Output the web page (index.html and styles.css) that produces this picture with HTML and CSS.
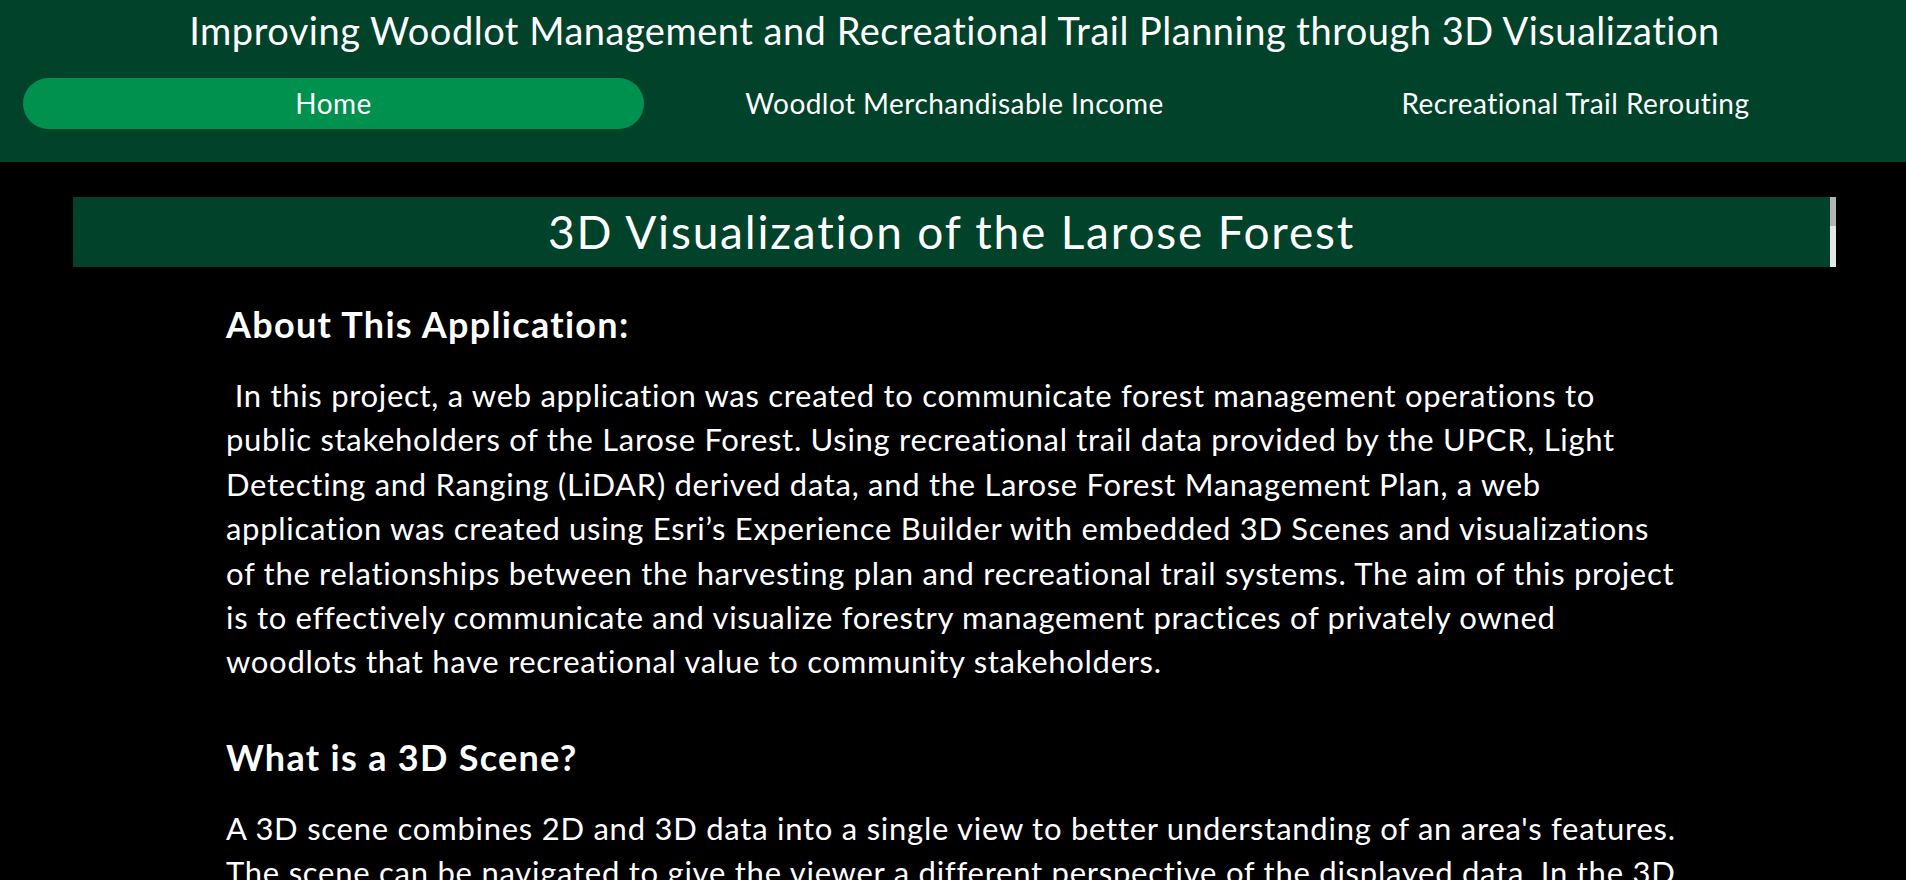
FILE: index.html
```html
<!DOCTYPE html>
<html lang="en">
<head>
<meta charset="utf-8">
<title>Improving Woodlot Management and Recreational Trail Planning through 3D Visualization</title>
<link rel="stylesheet" href="styles.css">
</head>
<body>
<header class="top">
  <h1 class="site-title">Improving Woodlot Management and Recreational Trail Planning through 3D Visualization</h1>
  <nav class="tabs">
    <a class="tab tab-active" href="#">Home</a>
    <a class="tab" href="#">Woodlot Merchandisable Income</a>
    <a class="tab" href="#">Recreational Trail Rerouting</a>
  </nav>
</header>
<main class="page">
  <div class="banner">
    <h2 class="banner-title">3D Visualization of the Larose Forest</h2>
    <div class="scrollbar"><div class="scrollbar-thumb"></div></div>
  </div>
  <section class="article">
    <h3 class="article-heading">About This Application:</h3>
    <p class="article-text">&nbsp;In this project, a web application was created to communicate forest management operations to<br>public stakeholders of the Larose Forest. Using recreational trail data provided by the UPCR, Light<br>Detecting and Ranging (LiDAR) derived data, and the Larose Forest Management Plan, a web<br>application was created using Esri’s Experience Builder with embedded 3D Scenes and visualizations<br>of the relationships between the harvesting plan and recreational trail systems. The aim of this project<br>is to effectively communicate and visualize forestry management practices of privately owned<br>woodlots that have recreational value to community stakeholders.</p>
    <h3 class="article-heading">What is a 3D Scene?</h3>
    <p class="article-text article-text-wide">A 3D scene combines 2D and 3D data into a single view to better understanding of an area's features.<br>The scene can be navigated to give the viewer a different perspective of the displayed data. In the 3D<br>scenes of this application, users can explore the forest stands and trails from any angle.</p>
  </section>
</main>
</body>
</html>
```

FILE: styles.css
```css
html, body {
  margin: 0;
  padding: 0;
  overflow: hidden;
  background: #000;
  color: #fff;
  font-family: Lato, "Open Sans", sans-serif;
}

.top {
  background: #00422a;
  padding: 8px 20px 33px 23px;
}

.site-title {
  margin: 0;
  font-size: 38px;
  line-height: 45px;
  letter-spacing: 0.5px;
  font-weight: 400;
  text-align: center;
}

.tabs {
  margin-top: 25px;
  display: grid;
  grid-template-columns: repeat(3, 1fr);
}

.tab {
  display: block;
  height: 51px;
  line-height: 51px;
  border-radius: 26px;
  text-align: center;
  color: #fff;
  text-decoration: none;
  font-size: 28px;
  letter-spacing: 0.45px;
}

.tab-active {
  background: #00914f;
}

.page {
  margin: 35px 70px 0 73px;
}

.banner {
  display: flex;
  height: 70px;
}

.banner-title {
  flex: 1;
  margin: 0;
  background: #00422a;
  font-size: 46px;
  line-height: 70px;
  letter-spacing: 1.8px;
  font-weight: 400;
  text-align: center;
}

.scrollbar {
  width: 6px;
  background: #e6e6e6;
}

.scrollbar-thumb {
  height: 29px;
  background: #b3b3b3;
}

.article {
  padding: 35px 100px 0 153px;
  margin-right: 6px;
}

.article-heading {
  margin: 0 0 27px;
  font-size: 36px;
  line-height: 44px;
  letter-spacing: 1.3px;
  font-weight: 700;
}

.article-text {
  margin: 0 0 51px;
  font-size: 31px;
  line-height: 44.4px;
  letter-spacing: 0.7px;
}

.article-text-wide {
  letter-spacing: 0.75px;
}
```
